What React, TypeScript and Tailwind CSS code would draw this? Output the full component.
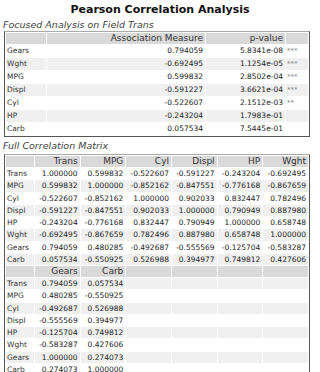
import React from "react";

const focused = [
  ["Gears", "0.794059", "5.8341e-08", "***"],
  ["Wght", "-0.692495", "1.1254e-05", "***"],
  ["MPG", "0.599832", "2.8502e-04", "***"],
  ["Displ", "-0.591227", "3.6621e-04", "***"],
  ["Cyl", "-0.522607", "2.1512e-03", "**"],
  ["HP", "-0.243204", "1.7983e-01", ""],
  ["Carb", "0.057534", "7.5445e-01", ""],
];

const vars = ["Trans", "MPG", "Cyl", "Displ", "HP", "Wght", "Gears", "Carb"];

const matrix = [
  ["1.000000", "0.599832", "-0.522607", "-0.591227", "-0.243204", "-0.692495", "0.794059", "0.057534"],
  ["0.599832", "1.000000", "-0.852162", "-0.847551", "-0.776168", "-0.867659", "0.480285", "-0.550925"],
  ["-0.522607", "-0.852162", "1.000000", "0.902033", "0.832447", "0.782496", "-0.492687", "0.526988"],
  ["-0.591227", "-0.847551", "0.902033", "1.000000", "0.790949", "0.887980", "-0.555569", "0.394977"],
  ["-0.243204", "-0.776168", "0.832447", "0.790949", "1.000000", "0.658748", "-0.125704", "0.749812"],
  ["-0.692495", "-0.867659", "0.782496", "0.887980", "0.658748", "1.000000", "-0.583287", "0.427606"],
  ["0.794059", "0.480285", "-0.492687", "-0.555569", "-0.125704", "-0.583287", "1.000000", "0.274073"],
  ["0.057534", "-0.550925", "0.526988", "0.394977", "0.749812", "0.427606", "0.274073", "1.000000"],
];

const font = { fontFamily: "'DejaVu Sans', Verdana, sans-serif" };

const th = "bg-[#d9d9d9] text-right font-normal text-[9px] leading-[11px] px-[2px] text-[#333]";
const td = "text-right text-[7.5px] px-[2px] whitespace-nowrap";

const stripe = (i: number) => (i % 2 === 1 ? "bg-[#f0f0f0]" : "bg-white");

const MatrixBlock = ({ cols, start }: { cols: number[]; start: number }) => (
  <>
    <tr>
      <th className={th}></th>
      {[0, 1, 2, 3, 4, 5].map((k) => (
        <th key={k} className={th}>
          {cols[k] !== undefined ? vars[cols[k]] : ""}
        </th>
      ))}
    </tr>
    {vars.map((v, r) => (
      <tr key={v} className={stripe(start + r)}>
        <td className="text-left text-[7.5px] h-[11.25px] leading-[11px] pl-[1px] text-[#333]">{v}</td>
        {[0, 1, 2, 3, 4, 5].map((k) => (
          <td key={k} className={td + " h-[11.25px] leading-[11px]"}>
            {cols[k] !== undefined ? matrix[r][cols[k]] : ""}
          </td>
        ))}
      </tr>
    ))}
  </>
);

export default function App() {
  return (
    <div className="bg-white w-[320px] h-[372px] overflow-hidden text-[#222]" style={font}>
      <h1 className="text-center font-bold text-[11px] leading-[14px] pt-[3px] text-[#111]">
        Pearson Correlation Analysis
      </h1>
      <p className="italic text-[9.5px] leading-[12px] pl-[3px] mt-[2px] text-[#444]">
        Focused Analysis on Field Trans
      </p>

      <table className="ml-[4px] mt-0 w-[306px] border-separate border-spacing-[1px] border border-[#555] border-t-[#aaa] table-fixed">
        <colgroup>
          <col className="w-[40px]" />
          <col />
          <col className="w-[79px]" />
          <col className="w-[22px]" />
        </colgroup>
        <thead>
          <tr>
            <th className={th}></th>
            <th className={th}>Association Measure</th>
            <th className={th}>p-value</th>
            <th className={th}></th>
          </tr>
        </thead>
        <tbody>
          {focused.map((row, i) => (
            <tr key={row[0]} className={stripe(i)}>
              <td className="text-left text-[7.5px] h-[12px] pl-[1px] text-[#333]">{row[0]}</td>
              <td className={td + " h-[12px]"}>{row[1]}</td>
              <td className={td + " h-[12px]"}>{row[2]}</td>
              <td className="text-left text-[7px] h-[12px] pl-[1px] text-[#888]">{row[3]}</td>
            </tr>
          ))}
        </tbody>
      </table>

      <p className="italic text-[9.5px] leading-[12px] pl-[3px] mt-[3px] text-[#444]">
        Full Correlation Matrix
      </p>

      <table className="ml-[4px] mt-[2px] w-[306px] border-separate border-spacing-[1px] border border-[#555] border-t-[#aaa] table-fixed">
        <colgroup>
          <col className="w-[28px]" />
          <col />
          <col />
          <col />
          <col />
          <col />
          <col />
        </colgroup>
        <tbody>
          <MatrixBlock cols={[0, 1, 2, 3, 4, 5]} start={0} />
          <MatrixBlock cols={[6, 7]} start={9} />
        </tbody>
      </table>
    </div>
  );
}
